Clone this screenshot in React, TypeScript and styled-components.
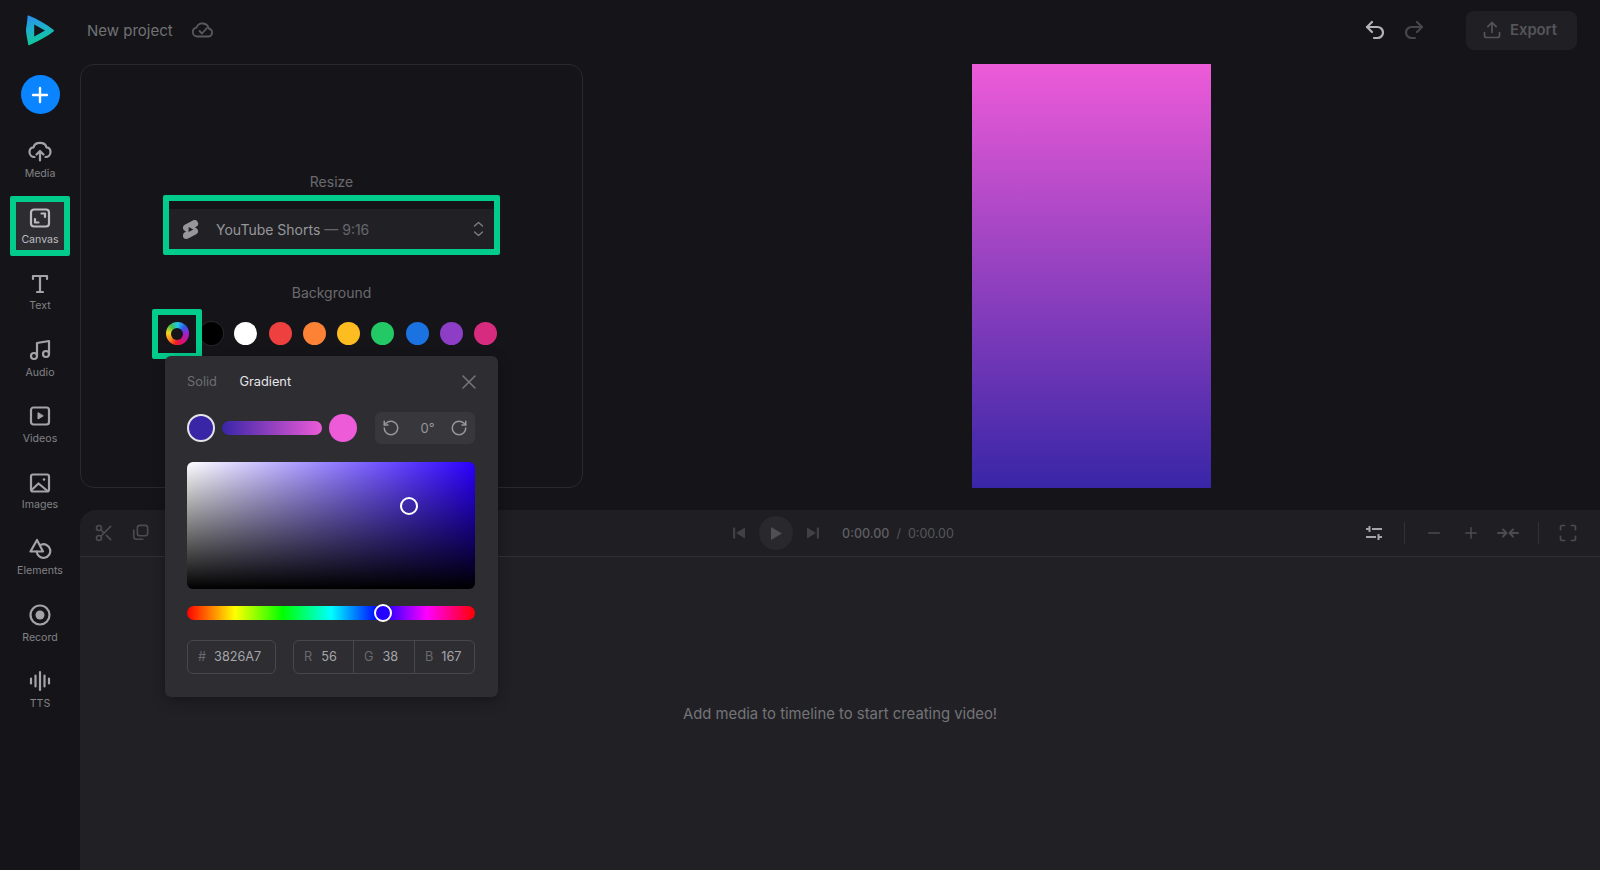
import React from "react";
import styled, { createGlobalStyle } from "styled-components";
import { Plus, Minus, X, RotateCcw, RotateCw, Undo2, Redo2, Scissors, Music, Upload } from "lucide-react";
import { SiYoutubeshorts } from "react-icons/si";

const Global = createGlobalStyle`
  html, body { margin: 0; padding: 0; background: #151519; }
  * { box-sizing: border-box; }
  body { font-family: Inter, "Liberation Sans", sans-serif; }
`;

const Page = styled.div`
  width: 1600px; height: 870px; display: flex; flex-direction: column;
  overflow: hidden; background: #151519; color: #8a8a8e;
`;
const Header = styled.header`
  height: 64px; flex: none; display: flex; align-items: center; padding: 0 23px 4px 0;
`;
const LogoCell = styled.div`
  width: 80px; margin-right: 7px; display: flex; justify-content: center;
`;
const ProjectName = styled.div`
  font-size: 15px; color: #717175; margin-right: 18px;
`;
const CloudMark = styled.svg`
  width: 24px; height: 24px; color: #5a5a5e;
`;
const Spacer = styled.div`flex: 1;`;
const HistoryButton = styled.div<{ $dim?: boolean }>`
  width: 39px; display: flex; justify-content: center;
  color: ${p => (p.$dim ? "#47474b" : "#b4b4b8")};
`;
const ExportButton = styled.div`
  width: 111px; height: 39px; margin-left: 33px; border-radius: 8px; background: #202024;
  display: flex; align-items: center; justify-content: center; gap: 8px; padding-right: 4px;
  color: #55555a; font-size: 14.8px; font-weight: 600;
`;
const Body = styled.div`flex: 1; display: flex; min-height: 0;`;
const Sidebar = styled.nav`
  width: 80px; flex: none; display: flex; flex-direction: column; align-items: center;
  padding-top: 11px;
`;
const AddButton = styled.div`
  width: 39px; height: 39px; border-radius: 50%; background: #0a84ff; color: #fff;
  display: flex; align-items: center; justify-content: center; margin-bottom: 21.5px;
`;
const SideItem = styled.div<{ $active?: boolean }>`
  position: relative; width: 48px; height: 48px; margin-bottom: 18.25px; padding-top: 1px; flex: none;
  display: flex; flex-direction: column; align-items: center; justify-content: center; gap: 3.5px;
  font-size: 10.6px; line-height: 14px; white-space: nowrap;
  color: ${p => (p.$active ? "#bcbcc0" : "#828286")};
  background: ${p => (p.$active ? "#2c2c31" : "transparent")};
  svg { color: ${p => (p.$active ? "#bcbcc0" : "#a4a4a8")}; stroke-width: 2.2; }
  ${p => p.$active && `&::after { content: ""; position: absolute; inset: -6px; border: 6px solid #02cc8b; border-radius: 2px; }`}
`;
const Main = styled.main`flex: 1; min-width: 0; display: flex; flex-direction: column;`;
const Stage = styled.section`height: 424px; flex: none; display: flex;`;
const Panel = styled.div`
  width: 503px; height: 424px; flex: none; border: 1px solid #2a2a2e; border-radius: 14px;
  padding-top: 107px; display: flex; flex-direction: column; align-items: center;
`;
const Label = styled.div`
  font-size: 14px; line-height: 20px; color: #6a6a6e; margin-bottom: 17px;
`;
const SecondLabel = styled(Label)`margin-top: 34px; margin-bottom: 19px;`;
const Select = styled.div`
  position: relative; width: 333px; height: 40px; flex: none; background: #212125;
  display: flex; align-items: center; padding: 0 14px 0 16px; font-size: 14px; color: #97979b;
  &::after { content: ""; position: absolute; inset: -14px -2px -6px -2px; border: 6px solid #02cc8b; border-radius: 2px; }
`;
const SelectText = styled.span`margin-left: 16px; flex: 1;`;
const Muted = styled.span`color: #66666a;`;
const Swatches = styled.div`display: flex; gap: 11.3px;`;
const Swatch = styled.div<{ $color: string }>`
  width: 23px; height: 23px; border-radius: 50%; background: ${p => p.$color};
  box-shadow: ${p => (p.$color === "#000000" ? "0 0 0 1px #25252a" : "none")};
`;
const Wheel = styled.div`
  position: relative; width: 23px; height: 23px; border-radius: 50%;
  background: conic-gradient(#22c7e8, #2b5ce8 45deg, #a020d0 90deg, #e01060 160deg, #ee2020 190deg, #ff9020 235deg, #f0d820 275deg, #40c050 320deg, #22c7e8);
  &::before { content: ""; position: absolute; inset: 5.5px; border-radius: 50%; background: #151519; }
  &::after { content: ""; position: absolute; inset: -13.5px; border: 6px solid #02cc8b; border-radius: 2px; z-index: 1; }
`;
const Popup = styled.div`
  position: relative; z-index: 2; width: 333px; height: 341px; flex: none; margin-top: 11px;
  background: #2d2d32; border-radius: 6px; padding: 16px 23px 0 22px;
  box-shadow: 0 4px 14px rgba(0, 0, 0, 0.3); display: flex; flex-direction: column;
`;
const Tabs = styled.div`
  height: 20px; display: flex; align-items: center; gap: 22.5px; font-size: 12.8px; line-height: 20px;
`;
const Tab = styled.span<{ $on?: boolean }>`
  color: ${p => (p.$on ? "#e6e6e8" : "#6e6e72")};
`;
const CloseBtn = styled.span`margin-left: auto; display: flex; color: #77777b; margin-right: -6px;`;
const GradientRow = styled.div`margin-top: 19.5px; height: 32px; display: flex; align-items: center;`;
const StartStop = styled.div`
  width: 28px; height: 28px; border-radius: 50%; background: #3826a7; border: 2px solid #e4e4e6; flex: none;
`;
const GradientBar = styled.div`
  width: 100px; height: 14px; margin: 0 7px; border-radius: 7px; flex: none;
  background: linear-gradient(to right, #3826a7, #ed5bd8);
`;
const EndStop = styled.div`width: 28px; height: 28px; border-radius: 50%; background: #ed5bd8; flex: none;`;
const AngleBox = styled.div`
  width: 100px; height: 32px; margin-left: 18px; border-radius: 6px; background: #37373c;
  display: flex; align-items: center; justify-content: space-between; padding: 0 7px;
  font-size: 13px; color: #97979b; svg { color: #97979b; }
`;
const AngleValue = styled.span`margin-left: 5px;`;
const Picker = styled.div`
  position: relative; height: 127px; margin-top: 18px; border-radius: 6px;
  background: linear-gradient(to top, #000, transparent), linear-gradient(to right, #fff, #2b00ff);
`;
const PickerHandle = styled.div`
  position: absolute; left: 222px; top: 44px; width: 18px; height: 18px; transform: translate(-50%, -50%);
  border-radius: 50%; border: 2.5px solid #fff;
`;
const HueBar = styled.div`
  position: relative; height: 14px; margin-top: 17px; border-radius: 7px;
  background: linear-gradient(to right, #f00, #ff0 16.7%, #0f0 33.3%, #0ff 50%, #00f 66.7%, #f0f 83.3%, #f00);
`;
const HueThumb = styled.div`
  position: absolute; left: 196px; top: 7px; width: 18px; height: 18px; transform: translate(-50%, -50%);
  border-radius: 50%; border: 2.5px solid #fff; background: #2400ff;
`;
const Inputs = styled.div`margin-top: 20px; display: flex; gap: 17px;`;
const InputGroup = styled.div<{ $w: number }>`
  width: ${p => p.$w}px; height: 34px; border: 1px solid #47474c; border-radius: 6px; display: flex;
  font-size: 12.7px; color: #a6a6aa;
`;
const InputCell = styled.div<{ $w?: number; $gap: number }>`
  ${p => (p.$w ? `width: ${p.$w}px;` : "flex: 1;")}
  display: flex; align-items: center; padding-left: 10px; gap: ${p => p.$gap}px;
  & + & { border-left: 1px solid #47474c; }
`;
const Prefix = styled.span`color: #6a6a6e;`;
const Preview = styled.div`flex: 1; display: flex; justify-content: center;`;
const Artboard = styled.div`
  width: 239px; height: 424px; background: linear-gradient(to bottom, #ed5bd8, #3826a7);
`;
const Timeline = styled.section`
  flex: 1; margin-top: 22px; background: #212125; border-top-left-radius: 16px;
  display: flex; flex-direction: column; min-height: 0;
`;
const Toolbar = styled.div`
  height: 47px; flex: none; display: grid; grid-template-columns: 1fr auto 1fr; align-items: center;
  border-bottom: 1px solid #323236; background: #1f1f23; border-top-left-radius: 16px; color: #414145;
`;
const ToolLeft = styled.div`display: flex; padding-left: 6px;`;
const ToolRight = styled.div`display: flex; align-items: center; justify-content: flex-end; padding-right: 13.5px;`;
const ToolBtn = styled.div<{ $w?: number; $bright?: boolean }>`
  width: ${p => p.$w ?? 37}px; display: flex; justify-content: center;
  color: ${p => (p.$bright ? "#a6a6aa" : "#4c4c50")};
`;
const Divider = styled.div`width: 1px; height: 22px; margin: 0 11px; background: #323236;`;
const Transport = styled.div`display: flex; align-items: center; padding-left: 5px;`;
const PlayCircle = styled.div`
  width: 34px; height: 34px; margin: 0 12px; border-radius: 50%; background: #29292d;
  display: flex; align-items: center; justify-content: center; color: #505054;
`;
const Time = styled.div`margin-left: 21px; font-size: 12.5px; color: #56565a; display: flex; gap: 7px;`;
const TimeNow = styled.span`font-weight: 500; color: #5e5e62;`;
const Empty = styled.div`
  flex: 1; display: flex; align-items: center; justify-content: center; font-size: 14.85px; color: #747478;
`;

const Logo = () => (
  <svg width="30" height="32" viewBox="0 0 30 32">
    <defs>
      <linearGradient id="lg" x1="0" y1="0" x2="0.2" y2="1">
        <stop offset="0" stopColor="#2a8df2" />
        <stop offset="0.5" stopColor="#1fb0cc" />
        <stop offset="1" stopColor="#0fc994" />
      </linearGradient>
    </defs>
    <path fillRule="evenodd" fill="url(#lg)" d="M3.6 1.6 C3 1.3 2.5 1.6 2.5 2.3 C2.3 10 0.9 14 1 16.5 C1.2 21 2.6 26 3.2 30.4 C3.3 31.2 4 31.5 4.6 31.1 C12 28 21.5 23 28.4 17.6 C29.2 17 29.2 16.3 28.4 15.7 C21 10 12 5 3.6 1.6 Z M9.2 10.5 L9.2 22.5 L20 16.5 Z" />
  </svg>
);
const I = ({ children, size = 24 }: { children: React.ReactNode; size?: number }) => (
  <svg width={size} height={size} viewBox="0 0 24 24" fill="none" stroke="currentColor" strokeWidth="2" strokeLinecap="round" strokeLinejoin="round">{children}</svg>
);
const sideItems: [string, React.ReactNode][] = [
  ["Media", <I><path d="M6.5 18C3.5 18 1.5 15.5 1.5 13C1.5 10.5 3.2 8.7 5.5 8.4C6.2 5.2 8.8 3.8 12 3.8C15.2 3.8 17.8 5.2 18.5 8.4C20.8 8.7 22.5 10.5 22.5 13C22.5 15.5 20.5 18 17.5 18" /><path d="M12 21.5V12M8.5 15.5 12 12l3.5 3.5" /></I>],
  ["Canvas", <I><rect x="3" y="3.5" width="18" height="17" rx="3" /><path d="M13.5 7.5h3.5v3.5M7 13v3.5h3.5" /></I>],
  ["Text", <I><path d="M5 7V4h14v3M12 4v16M9 20h6" /></I>],
  ["Audio", <Music size={24} />],
  ["Videos", <I><rect x="3" y="3.5" width="18" height="17" rx="2.5" /><path d="M10 9v6l5-3z" fill="currentColor" strokeWidth="1" /></I>],
  ["Images", <I><rect x="3" y="3.5" width="18" height="17" rx="2" /><path d="M3.5 19l7-6.5 8.5 7" /><circle cx="16" cy="8.5" r="1.3" fill="currentColor" stroke="none" /></I>],
  ["Elements", <I><path d="M9 3 2.5 14.5H15Z" /><path d="M13 7.7A6.8 6.8 0 1 1 8.7 14.5" /></I>],
  ["Record", <I><circle cx="12" cy="12" r="9.5" /><circle cx="12" cy="12" r="4.5" fill="currentColor" stroke="none" /></I>],
  ["TTS", <I><path d="M3 9.5v5M7.5 6.5v11M12 3v18M16.5 6.5v11M21 9.5v5" /></I>],
];
const swatches = ["#000000", "#ffffff", "#ef4040", "#fd8235", "#fdbc1f", "#22c964", "#1b73e2", "#8e3dc6", "#d62b7e"];

export default function App() {
  return (
    <Page>
      <Global />
      <Header>
        <LogoCell><Logo /></LogoCell>
        <ProjectName>New project</ProjectName>
        <CloudMark viewBox="0 0 24 24" fill="none" stroke="currentColor" strokeWidth="1.8" strokeLinecap="round" strokeLinejoin="round">
          <path d="M6 18.5a4.5 4.5 0 0 1-.6-8.9 6.5 6.5 0 0 1 12.4 1 4 4 0 0 1-.3 7.9H6z" />
          <path d="M8.5 13l2.5 2.5L16 10" />
        </CloudMark>
        <Spacer />
        <HistoryButton><Undo2 size={24} strokeWidth={2.2} /></HistoryButton>
        <HistoryButton $dim><Redo2 size={24} strokeWidth={2.2} /></HistoryButton>
        <ExportButton><Upload size={20} />Export</ExportButton>
      </Header>
      <Body>
        <Sidebar>
          <AddButton><Plus size={24} strokeWidth={2.4} /></AddButton>
          {sideItems.map(([name, icon]) => (
            <SideItem key={name} $active={name === "Canvas"}>{icon}{name}</SideItem>
          ))}
        </Sidebar>
        <Main>
          <Stage>
            <Panel>
              <Label>Resize</Label>
              <Select>
                <SiYoutubeshorts size={19} color="#97979b" />
                <SelectText>YouTube Shorts <Muted>— 9:16</Muted></SelectText>
                <svg width="11" height="18" viewBox="0 0 11 18" fill="none" stroke="#7c7c80" strokeWidth="1.4" strokeLinecap="round" strokeLinejoin="round">
                  <path d="M1.5 6 5.5 2.5 9.5 6M1.5 12l4 3.5 4-3.5" />
                </svg>
              </Select>
              <SecondLabel>Background</SecondLabel>
              <Swatches>
                <Wheel />
                {swatches.map(c => <Swatch key={c} $color={c} />)}
              </Swatches>
              <Popup>
                <Tabs>
                  <Tab>Solid</Tab>
                  <Tab $on>Gradient</Tab>
                  <CloseBtn><X size={24} strokeWidth={1.5} /></CloseBtn>
                </Tabs>
                <GradientRow>
                  <StartStop />
                  <GradientBar />
                  <EndStop />
                  <AngleBox>
                    <RotateCcw size={18} />
                    <AngleValue>0°</AngleValue>
                    <RotateCw size={18} />
                  </AngleBox>
                </GradientRow>
                <Picker><PickerHandle /></Picker>
                <HueBar><HueThumb /></HueBar>
                <Inputs>
                  <InputGroup $w={89}>
                    <InputCell $gap={8}><Prefix>#</Prefix>3826A7</InputCell>
                  </InputGroup>
                  <InputGroup $w={182}>
                    <InputCell $w={59} $gap={9}><Prefix>R</Prefix>56</InputCell>
                    <InputCell $w={61} $gap={9}><Prefix>G</Prefix>38</InputCell>
                    <InputCell $gap={8}><Prefix>B</Prefix>167</InputCell>
                  </InputGroup>
                </Inputs>
              </Popup>
            </Panel>
            <Preview><Artboard /></Preview>
          </Stage>
          <Timeline>
            <Toolbar>
              <ToolLeft>
                <ToolBtn $w={36}><Scissors size={20} /></ToolBtn>
                <ToolBtn $w={36}>
                  <I size={19}><rect x="8" y="3" width="13" height="13" rx="3" /><path d="M3.5 9v8.5a3 3 0 0 0 3 3H15" /></I>
                </ToolBtn>
              </ToolLeft>
              <Transport>
                <svg width="16" height="16" viewBox="0 0 16 16" fill="currentColor"><rect x="2" y="2.5" width="2.2" height="11" rx="0.6" /><path d="M14 2.5v11L5 8z" /></svg>
                <PlayCircle>
                  <svg width="13" height="15" viewBox="0 0 13 15" fill="currentColor"><path d="M1 1v13l11-6.5z" /></svg>
                </PlayCircle>
                <svg width="16" height="16" viewBox="0 0 16 16" fill="currentColor"><rect x="11.8" y="2.5" width="2.2" height="11" rx="0.6" /><path d="M2 2.5v11L11 8z" /></svg>
                <Time><TimeNow>0:00.00</TimeNow><span>/</span><span>0:00.00</span></Time>
              </Transport>
              <ToolRight>
                <ToolBtn $bright>
                  <svg width="18" height="18" viewBox="0 0 18 18" fill="none" stroke="currentColor" strokeWidth="2"><path d="M7 5h10M1 5h3M4.5 2v6M1 13h10M14 13h3M13.5 10v6" /></svg>
                </ToolBtn>
                <Divider />
                <ToolBtn><Minus size={18} /></ToolBtn>
                <ToolBtn><Plus size={18} /></ToolBtn>
                <ToolBtn>
                  <I size={24}><path d="M2 12h8M7 8.5l3.5 3.5L7 15.5M22 12h-8M17 8.5 13.5 12l3.5 3.5" /></I>
                </ToolBtn>
                <Divider />
                <ToolBtn>
                  <I size={20}><path d="M8 3H5a2 2 0 0 0-2 2v3M16 3h3a2 2 0 0 1 2 2v3M8 21H5a2 2 0 0 1-2-2v-3M16 21h3a2 2 0 0 0 2-2v-3" /></I>
                </ToolBtn>
              </ToolRight>
            </Toolbar>
            <Empty>Add media to timeline to start creating video!</Empty>
          </Timeline>
        </Main>
      </Body>
    </Page>
  );
}
